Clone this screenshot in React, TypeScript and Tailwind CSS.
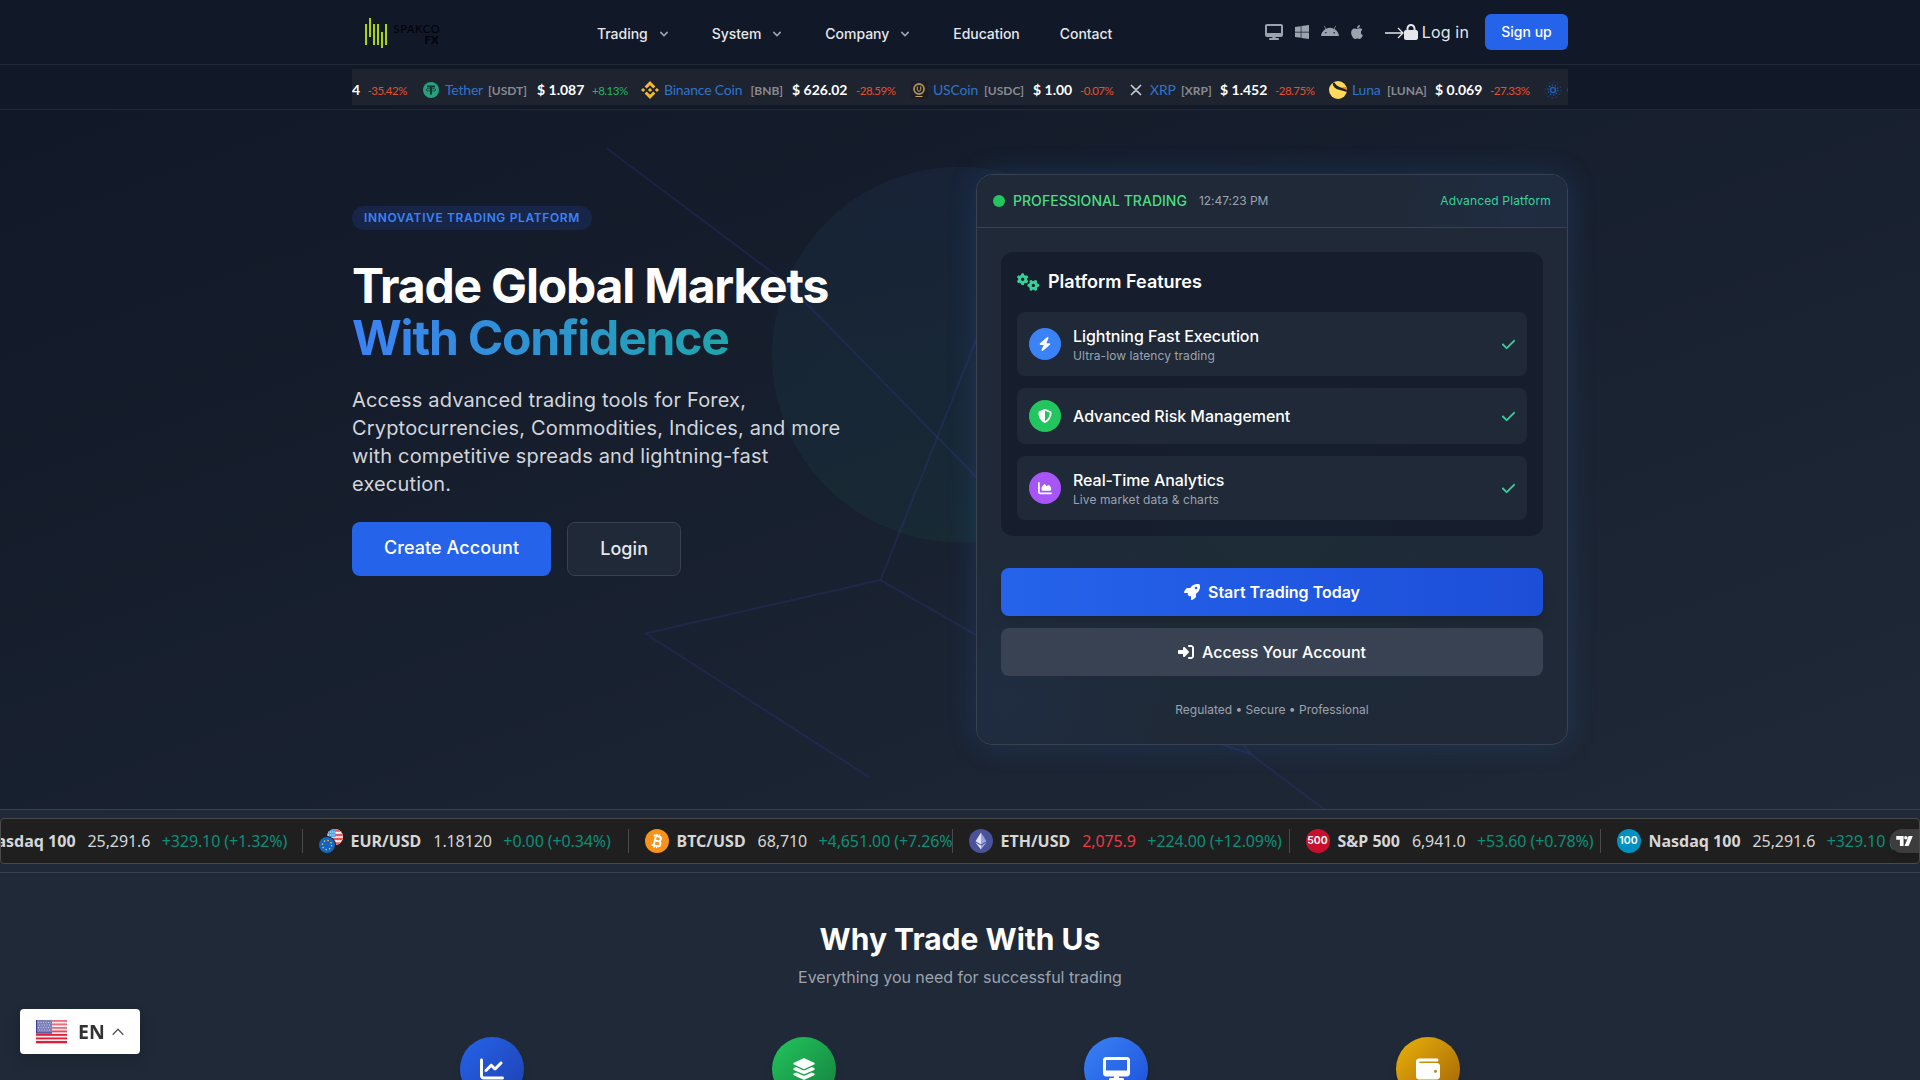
import type { ReactNode } from "react";
import {
  FaAndroid,
  FaApple,
  FaBolt,
  FaChartArea,
  FaChartLine,
  FaCheck,
  FaDesktop,
  FaGears,
  FaLayerGroup,
  FaLock,
  FaRightToBracket,
  FaRocket,
  FaShieldHalved,
  FaWallet,
  FaWindows,
} from "react-icons/fa6";

interface NavItem {
  label: string;
  menu?: boolean;
}

const navItems: NavItem[] = [
  { label: "Trading", menu: true },
  { label: "System", menu: true },
  { label: "Company", menu: true },
  { label: "Education" },
  { label: "Contact" },
];

function Logo() {
  return (
    <svg width="100" height="40" viewBox="0 0 100 40" className="shrink-0">
      <g fill="#a8d60a">
        <rect x="13" y="12" width="2" height="21" />
        <rect x="17" y="6" width="2" height="19" />
        <rect x="21" y="12" width="2" height="21" />
        <rect x="25" y="12" width="2" height="21" />
        <rect x="29" y="20" width="2" height="16" />
        <rect x="33" y="12" width="2" height="21" />
      </g>
      <g fill="#020306" fontFamily="Lato, sans-serif">
        <text x="41.5" y="21" fontSize="11" textLength="46">
          SPAKCO
        </text>
        <text x="72.5" y="31.5" fontSize="11" fontWeight="900" textLength="14">
          FX
        </text>
      </g>
    </svg>
  );
}

function Header() {
  return (
    <header className="h-[65px] bg-[#111827] border-b border-[#1f2937]">
      <div className="w-[1216px] h-16 mx-auto flex items-center">
        <Logo />
        <nav className="flex items-center gap-10 ml-[145px] pt-1 text-sm font-medium tracking-[-0.04px] text-[#e5e7eb]">
          {navItems.map((item) => (
            <span key={item.label} className="flex items-center">
              {item.label}
              {item.menu && (
                <svg
                  className="w-4 h-4 ml-2 text-[#9ca3af]"
                  viewBox="0 0 20 20"
                  fill="currentColor"
                >
                  <path d="M5.293 7.293a1 1 0 011.414 0L10 10.586l3.293-3.293a1 1 0 111.414 1.414l-4 4a1 1 0 01-1.414 0l-4-4a1 1 0 010-1.414z" />
                </svg>
              )}
            </span>
          ))}
        </nav>
        <div className="ml-auto flex items-center">
          <div className="flex items-center gap-3 text-[#9ca3af]">
            <FaDesktop className="w-[18px] h-4" />
            <FaWindows className="w-3.5 h-4" />
            <FaAndroid className="w-[18px] h-4" />
            <FaApple className="w-3 h-4" />
          </div>
          <div className="flex items-center ml-[22px] text-base tracking-[0.15px] text-[#e5e7eb]">
            <svg width="19" height="16" viewBox="0 0 19 16" fill="none" stroke="currentColor" strokeWidth="1.3">
              <path d="M0 9h18M13 4l5 5-5 5" />
            </svg>
            <FaLock className="w-3.5 h-4 mr-1" />
            Log in
          </div>
          <button className="ml-4 w-[83px] h-9 rounded-md bg-[#2563eb] text-sm font-medium text-white">
            Sign up
          </button>
        </div>
      </div>
    </header>
  );
}

interface Coin {
  name: string;
  symbol: string;
  price: string;
  change: string;
  icon: ReactNode;
  width: string;
  nameWidth: string;
  symbolWidth: string;
  priceWidth: string;
}

const coins: Coin[] = [
  {
    name: "Tether",
    symbol: "[USDT]",
    price: "$ 1.087",
    change: "+8.13%",
    width: "w-[219px]",
    nameWidth: "w-[43px]",
    symbolWidth: "w-[49px]",
    priceWidth: "w-[55px]",
    icon: (
      <svg width="18" height="18" viewBox="0 0 18 18">
        <circle cx="9" cy="9" r="8" fill="#26a17b" />
        <path d="M5 4.5h8v2h-3v7H8v-7H5z" fill="#123a35" />
        <ellipse cx="9" cy="8.8" rx="5" ry="1.3" fill="none" stroke="#123a35" strokeWidth=".8" />
      </svg>
    ),
  },
  {
    name: "Binance Coin",
    symbol: "[BNB]",
    price: "$ 626.02",
    change: "-28.59%",
    width: "w-[269px]",
    nameWidth: "w-[86.5px]",
    symbolWidth: "w-[41.5px]",
    priceWidth: "w-[64px]",
    icon: (
      <svg width="18" height="18" viewBox="0 0 18 18" fill="#f3ba2f">
        <path d="M9 0l5.4 5.4-2.1 2.1L9 4.2 5.7 7.5 3.6 5.4zM2.1 6.9L4.2 9l-2.1 2.1L0 9zM15.9 6.9L18 9l-2.1 2.1L13.8 9zM9 6.9L11.1 9 9 11.1 6.9 9zM5.7 10.5L9 13.8l3.3-3.3 2.1 2.1L9 18l-5.4-5.4z" />
      </svg>
    ),
  },
  {
    name: "USCoin",
    symbol: "[USDC]",
    price: "$ 1.00",
    change: "-0.07%",
    width: "w-[217px]",
    nameWidth: "w-[51px]",
    symbolWidth: "w-[49px]",
    priceWidth: "w-[47px]",
    icon: (
      <svg width="18" height="18" viewBox="0 0 18 18">
        <rect width="18" height="18" fill="#1d1e27" />
        <circle cx="9" cy="8" r="5" fill="none" stroke="#a98d55" strokeWidth="1.8" />
        <path d="M7.3 5.5v3a1.7 1.7 0 003.4 0v-3M5.5 15.5h7" fill="none" stroke="#c2a468" />
      </svg>
    ),
  },
  {
    name: "XRP",
    symbol: "[XRP]",
    price: "$ 1.452",
    change: "-28.75%",
    width: "w-[202px]",
    nameWidth: "w-[31px]",
    symbolWidth: "w-[39px]",
    priceWidth: "w-[55px]",
    icon: (
      <svg width="18" height="18" viewBox="0 0 18 18" fill="none" stroke="#c8cbd0" strokeWidth="1.6">
        <path d="M4 4l3.6 3.6q1.4 1.2 2.8 0L14 4M4 14l3.6-3.6q1.4-1.2 2.8 0L14 14" />
      </svg>
    ),
  },
  {
    name: "Luna",
    symbol: "[LUNA]",
    price: "$ 0.069",
    change: "-27.33%",
    width: "w-[215px]",
    nameWidth: "w-[35px]",
    symbolWidth: "w-[48px]",
    priceWidth: "w-[55px]",
    icon: (
      <svg width="18" height="18" viewBox="0 0 18 18">
        <circle cx="9" cy="9" r="9" fill="#ffd95a" />
        <path d="M3.5 2.5Q4.500 7.500 10 8.800T17.700 11A9 9 0 0018 8.500Q14 7 10.500 6T5.200 1.300z" fill="#1e2330" />
        <path d="M12.5 6.3q3 .8 5.4 3.200A9 9 0 0017.300 6z" fill="#f47b2a" />
      </svg>
    ),
  },
  {
    name: "Cardano",
    symbol: "[ADA]",
    price: "$ 0.283",
    change: "-25.20%",
    width: "w-[230px]",
    nameWidth: "w-[55px]",
    symbolWidth: "w-[40px]",
    priceWidth: "w-[55px]",
    icon: (
      <svg width="18" height="18" viewBox="0 0 18 18" fill="none" stroke="#1d5fb8">
        <circle cx="9" cy="9" r="2.5" strokeWidth="1.6" />
        <circle cx="9" cy="9" r="5" strokeWidth="1.2" strokeDasharray="1.5 1.6" />
        <circle cx="9" cy="9" r="7.8" strokeDasharray="1.2 2.9" opacity=".7" />
      </svg>
    ),
  },
];

function CoinTicker() {
  return (
    <div className="h-[45px] py-1 bg-[#111827] border-b border-[#1f2937]">
      <div className="w-[1216px] h-9 mx-auto overflow-hidden bg-[#1e2330] flex items-center pt-1.5 whitespace-nowrap font-['Lato',sans-serif] text-sm">
        <span className="w-[15.5px] shrink-0 font-bold text-white">4</span>
        <span className="w-[54.5px] shrink-0 text-[11.5px] pt-0.5 tracking-[-0.5px] text-[#e4502a]">
          -35.42%
        </span>
        {coins.map((coin) => (
          <div key={coin.name} className={`flex items-center shrink-0 ${coin.width}`}>
            <span className="w-[23px] shrink-0">{coin.icon}</span>
            <span className={`shrink-0 tracking-[-0.2px] text-[#2f74c8] ${coin.nameWidth}`}>
              {coin.name}
            </span>
            <span
              className={`shrink-0 text-[12px] pt-0.5 font-bold text-[#888a8f] ${coin.symbolWidth}`}
            >
              {coin.symbol}
            </span>
            <span className={`shrink-0 font-bold text-white ${coin.priceWidth}`}>{coin.price}</span>
            <span
              className={`text-[11.5px] pt-0.5 tracking-[-0.5px] ${
                coin.change.startsWith("+") ? "text-[#27b35c]" : "text-[#e4502a]"
              }`}
            >
              {coin.change}
            </span>
          </div>
        ))}
      </div>
    </div>
  );
}

function HeroBackdrop() {
  return (
    <svg
      className="absolute inset-0"
      width="1920"
      height="699"
      viewBox="0 110 1920 699"
      fill="none"
    >
      <defs>
        <linearGradient id="orb" x1="0" y1="0" x2="0" y2="1">
          <stop offset="0" stopColor="#3b82f6" />
          <stop offset="1" stopColor="#10b981" />
        </linearGradient>
      </defs>
      <circle cx="959.5" cy="354.5" r="187.5" fill="url(#orb)" opacity=".055" />
      <g stroke="#4f46e5" strokeOpacity=".15" strokeWidth="2">
        <path d="M607 148.5L787 283.5L990 491" />
        <path d="M990 305L880.5 580L990 643" />
        <path d="M880.5 580L645.5 633.5L869 777" />
        <path d="M1200 737L1250.5 754L1325 810" />
        <path d="M1232 730L1250.5 754" />
      </g>
    </svg>
  );
}

interface Feature {
  title: string;
  note?: string;
  color: string;
  icon: ReactNode;
}

const features: Feature[] = [
  {
    title: "Lightning Fast Execution",
    note: "Ultra-low latency trading",
    color: "bg-[#3b82f6]",
    icon: <FaBolt />,
  },
  {
    title: "Advanced Risk Management",
    color: "bg-[#22c55e]",
    icon: <FaShieldHalved />,
  },
  {
    title: "Real-Time Analytics",
    note: "Live market data & charts",
    color: "bg-[#a855f7]",
    icon: <FaChartArea />,
  },
];

function PlatformCard() {
  return (
    <div className="h-[571px] rounded-2xl border border-[#374151] bg-[#1f2937] shadow-[0_0_30px_rgba(59,130,246,0.18)] overflow-hidden">
      <div className="h-[53px] px-4 flex items-center border-b border-[#374151] bg-[#1f2937] bg-[radial-gradient(circle_at_92%_80%,#1f2c42,transparent_25%)]">
        <span className="w-3 h-3 rounded-full bg-[#22c55e] mr-2" />
        <span className="text-sm font-medium tracking-[0.03px] text-[#4ade80]">
          PROFESSIONAL TRADING
        </span>
        <span className="ml-3 text-xs tracking-[-0.05px] text-[#9ca3af]">12:47:23 PM</span>
        <span className="ml-auto text-xs tracking-[0.15px] text-[#34d399]">Advanced Platform</span>
      </div>
      <div className="h-[516px] p-6 bg-[radial-gradient(circle_at_5%_92%,#1f2d41,transparent_25%),radial-gradient(circle_at_50%_55%,#1d2c37,transparent_60%)]">
        <div className="p-4 rounded-xl bg-[#111827]/60">
          <h3 className="flex items-center mb-4 text-lg font-semibold text-white">
            <FaGears className="w-[22.5px] h-[18px] mr-[8.5px] text-[#34d399]" />
            Platform Features
          </h3>
          <div className="flex flex-col gap-3">
            {features.map((feature) => (
              <div key={feature.title} className="flex items-center p-3 rounded-lg bg-[#1f2937]">
                <span
                  className={`w-8 h-8 mr-3 rounded-full flex items-center justify-center text-sm text-white ${feature.color}`}
                >
                  {feature.icon}
                </span>
                <div>
                  <p className="font-medium tracking-[-0.05px] text-white">{feature.title}</p>
                  {feature.note && (
                    <p className="text-xs tracking-[0.08px] text-[#9ca3af]">{feature.note}</p>
                  )}
                </div>
                <FaCheck className="ml-auto w-[13px] h-[15px] text-[#34d399]" />
              </div>
            ))}
          </div>
        </div>
        <button className="mt-8 w-full h-12 rounded-lg flex items-center justify-center bg-linear-to-r from-[#2563eb] to-[#1d4ed8] font-semibold text-white shadow-lg">
          <FaRocket className="mr-2" />
          Start Trading Today
        </button>
        <button className="mt-3 w-full h-12 rounded-lg flex items-center justify-center bg-[#394252] font-medium text-white">
          <FaRightToBracket className="mr-2" />
          Access Your Account
        </button>
        <p className="mt-[26px] text-center text-xs text-[#9ca3af]">
          Regulated • Secure • Professional
        </p>
      </div>
    </div>
  );
}

function Hero() {
  return (
    <section className="relative h-[699px] bg-linear-to-br from-[#111827] to-[#1f2937]">
      <HeroBackdrop />
      <div className="relative w-[1216px] mx-auto pt-16 grid grid-cols-2 gap-8">
        <div className="pt-8">
          <span className="flex w-[240px] h-6 items-center px-3 rounded-full bg-[#172548] text-xs font-semibold tracking-[0.63px] whitespace-nowrap text-[#3b82f6]">
            INNOVATIVE TRADING PLATFORM
          </span>
          <h1 className="mt-[30px] text-5xl leading-[52px] font-bold tracking-tight text-white">
            Trade Global Markets
            <span className="block text-transparent bg-clip-text bg-linear-to-r/srgb from-[#3b82f6] to-[#10b981]">
              With Confidence
            </span>
          </h1>
          <p className="mt-[22px] max-w-lg text-xl tracking-[0.17px] text-[#d1d5db]">
            Access advanced trading tools for Forex, Cryptocurrencies, Commodities, Indices, and
            more with competitive spreads and lightning-fast execution.
          </p>
          <div className="mt-6 flex gap-4 text-lg font-medium tracking-[0.07px]">
            <a className="px-8 py-3 rounded-lg bg-[#2563eb] text-white">Create Account</a>
            <a className="px-8 py-3 rounded-lg border border-[#374151] bg-[#1f2937] text-[#e5e7eb]">
              Login
            </a>
          </div>
        </div>
        <PlatformCard />
      </div>
    </section>
  );
}

interface Quote {
  name: string;
  price: string;
  change: string;
  icon: ReactNode;
  width: string;
  down?: boolean;
}

const nasdaqIcon = (
  <span className="w-6 h-6 rounded-full flex items-center justify-center bg-[#0091c0] font-['Inter'] text-[10.5px] font-semibold text-white">
    100
  </span>
);

const quotes: Quote[] = [
  {
    name: "Nasdaq 100",
    price: "25,291.6",
    change: "+329.10 (+1.32%)",
    icon: nasdaqIcon,
    width: "w-[367px]",
  },
  {
    name: "EUR/USD",
    price: "1.18120",
    change: "+0.00 (+0.34%)",
    width: "w-[326px]",
    icon: (
      <svg width="24" height="24" viewBox="0 0 24 24">
        <clipPath id="us">
          <circle cx="16" cy="8" r="8" />
        </clipPath>
        <g clipPath="url(#us)">
          <rect x="8" width="16" height="16" fill="#fff" />
          <path d="M8 1.5h16M8 6h16M8 10h16M8 14.5h16" stroke="#ef5350" strokeWidth="2.3" />
          <rect x="8" width="8.5" height="8" fill="#4aa3ec" />
          <path d="M9 3h7M9 6h7" stroke="#fff" strokeDasharray="1 1.2" />
        </g>
        <circle cx="8" cy="16" r="9" fill="#1f1f1f" />
        <circle cx="8" cy="16" r="8" fill="#1565c0" />
        <circle cx="8" cy="16" r="4.6" fill="none" stroke="#ffd740" strokeWidth="1.3" strokeDasharray="1.3 2.3" />
      </svg>
    ),
  },
  {
    name: "BTC/USD",
    price: "68,710",
    change: "+4,651.00 (+7.26%)",
    width: "w-[324px]",
    icon: (
      <svg width="24" height="24" viewBox="0 0 24 24">
        <circle cx="12" cy="12" r="12" fill="#f7931a" />
        <g transform="rotate(13 12 12)" fill="none" stroke="#fff" strokeWidth="2">
          <path d="M7.5 7.2h5.5a2.3 2.3 0 010 4.7H9.8h3.7a2.5 2.5 0 010 5H7.5M9.8 7v10" />
          <path d="M10.5 5v2M13 5v2M10.5 17v2M13 17v2" strokeWidth="1.4" />
        </g>
      </svg>
    ),
  },
  {
    name: "ETH/USD",
    price: "2,075.9",
    change: "+224.00 (+12.09%)",
    width: "w-[337px]",
    down: true,
    icon: (
      <svg width="24" height="24" viewBox="0 0 24 24">
        <circle cx="12" cy="12" r="12" fill="#4a5299" />
        <path d="M12 3.5L6.5 12.3 12 15.5z" fill="#e3e6fa" />
        <path d="M12 3.5l5.5 8.8L12 15.5z" fill="#9aa5e6" />
        <path d="M6.5 13.5L12 20.5v-4z" fill="#e3e6fa" />
        <path d="M17.5 13.5L12 20.5v-4z" fill="#9aa5e6" />
      </svg>
    ),
  },
  {
    name: "S&P 500",
    price: "6,941.0",
    change: "+53.60 (+0.78%)",
    width: "w-[311px]",
    icon: (
      <span className="w-6 h-6 rounded-full flex items-center justify-center bg-[#c8102e] font-['Inter'] text-[10.5px] font-semibold text-white">
        500
      </span>
    ),
  },
  {
    name: "Nasdaq 100",
    price: "25,291.6",
    change: "+329.10 (+1.32%)",
    icon: nasdaqIcon,
    width: "w-[367px]",
  },
];

function MarketTicker() {
  return (
    <section className="h-16 py-2 border-y border-[#374151] bg-[#1f2937]">
      <div className="relative h-[46px] rounded border border-[#4a4a4a] bg-[#1f1f1f] overflow-hidden">
        <div className="-ml-[65.5px] h-full flex items-center whitespace-nowrap font-['Noto_Sans',sans-serif] text-base text-[#d6d6d6]">
          {quotes.map((quote, i) => (
            <div
              key={i}
              className={`h-6 shrink-0 pl-4 flex items-center overflow-hidden border-r border-[#4a4a4a] ${quote.width}`}
            >
              <span className="w-6 shrink-0 mr-2">{quote.icon}</span>
              <span className="mr-3 font-bold">{quote.name}</span>
              <span
                className={`mr-[11.5px] tracking-[-0.1px] ${quote.down ? "text-[#f23645]" : ""}`}
              >
                {quote.price}
              </span>
              <span className="tracking-[-0.11px] text-[#0a9079]">{quote.change}</span>
            </div>
          ))}
        </div>
        <span className="absolute right-0 top-[10px] w-[29px] h-6 pl-1.5 rounded-l-full bg-[#3d3d3d] flex items-center shadow-md">
          <svg width="17" height="11" viewBox="0 0 18 12" fill="#fff">
            <path d="M0 0h8v11H4V4H0zM13.5 0H18l-4.5 11H9z" />
            <circle cx="10.5" cy="2" r="1.9" />
          </svg>
        </span>
      </div>
    </section>
  );
}

const reasons = [
  { icon: <FaChartLine />, tone: "from-[#2563eb] to-[#1e40af]" },
  { icon: <FaLayerGroup />, tone: "from-[#22c55e] to-[#15803d]" },
  { icon: <FaDesktop className="w-[27px]" />, tone: "from-[#3b82f6] to-[#1d4ed8]" },
  { icon: <FaWallet />, tone: "from-[#eab308] to-[#a16207]" },
];

function WhyTrade() {
  return (
    <section className="h-[207px] pt-12 bg-[#1f2937] overflow-hidden">
      <h2 className="text-center text-3xl font-bold text-white">Why Trade With Us</h2>
      <p className="mt-2 text-center tracking-[-0.03px] text-[#9ca3af]">
        Everything you need for successful trading
      </p>
      <div className="w-[1216px] mx-auto mt-12 grid grid-cols-4 gap-8">
        {reasons.map((reason, i) => (
          <div key={i} className="flex justify-center">
            <span
              className={`w-16 h-16 rounded-full flex items-center justify-center text-2xl text-white bg-linear-to-br shadow-lg ${reason.tone}`}
            >
              {reason.icon}
            </span>
          </div>
        ))}
      </div>
    </section>
  );
}

function LanguageSwitcher() {
  return (
    <div className="fixed left-5 top-[1009px] w-[120px] h-[45px] pl-4 flex items-center rounded-sm bg-white shadow-[0_5px_15px_rgba(0,0,0,0.15)]">
      <svg width="31" height="24" viewBox="0 0 31 24">
        <rect width="31" height="23" fill="#f7e9ec" />
        <g fill="#e0203a">
          <rect y="0" width="31" height="1.8" opacity=".6" />
          <rect y="3.5" width="31" height="1.8" opacity=".6" />
          <rect y="7" width="31" height="1.8" opacity=".6" />
          <rect y="10.5" width="31" height="1.8" opacity=".8" />
          <rect y="14" width="31" height="1.8" />
          <rect y="17.5" width="31" height="1.8" />
          <rect y="21" width="31" height="2" />
        </g>
        <rect width="16" height="13.5" fill="#7e80b8" />
        <path d="M0 13h16M.5 0v13" stroke="#3c3f8f" />
        <path d="M2 2.5h13M3 5h12M2 7.5h13M3 10h12" stroke="#c5c7e3" strokeDasharray="1 1.5" />
        <path d="M0 23.5h31" stroke="#bbb" strokeWidth=".8" />
      </svg>
      <span className="ml-[11px] font-['Noto_Sans',sans-serif] text-[19.5px] font-bold text-[#333]">
        EN
      </span>
      <svg className="ml-[7px]" width="12" height="8" viewBox="0 0 12 8" fill="none" stroke="#555" strokeWidth="1.3">
        <path d="M.7 6.7L6 1.2l5.3 5.5" />
      </svg>
    </div>
  );
}

export default function App() {
  return (
    <div className="h-[1080px] overflow-hidden bg-[#1f2937] font-['Inter',sans-serif]">
      <Header />
      <CoinTicker />
      <Hero />
      <MarketTicker />
      <WhyTrade />
      <LanguageSwitcher />
    </div>
  );
}
